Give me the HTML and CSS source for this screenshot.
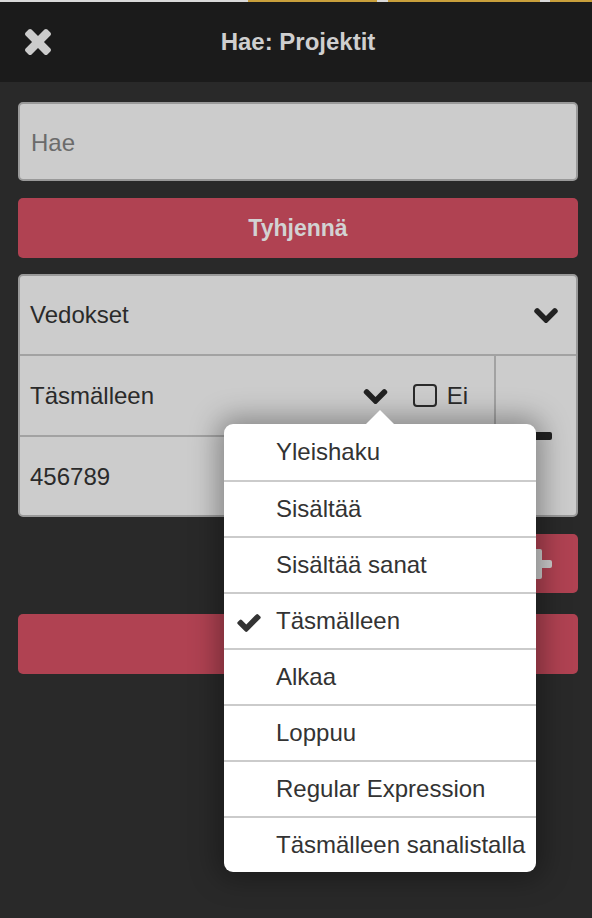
FILE: index.html
```html
<!DOCTYPE html>
<html lang="fi">
<head>
<meta charset="utf-8">
<title>Hae: Projektit</title>
<link rel="stylesheet" href="styles.css">
</head>
<body>
<div class="topstrip"></div>
<header class="bar">
  <div class="bar-left">
    <svg class="close-icon" viewBox="110 366 1188 1188" width="26" height="26" aria-hidden="true"><path d="M1298 1322q0 40-28 68l-136 136q-28 28-68 28t-68-28l-294-294-294 294q-28 28-68 28t-68-28l-136-136q-28-28-28-68t28-68l294-294-294-294q-28-28-28-68t28-68l136-136q28-28 68-28t68 28l294 294 294-294q28-28 68-28t68 28l136 136q28 28 28 68t-28 68l-294 294 294 294q28 28 28 68z"/></svg>
  </div>
  <h1 class="title">Hae: Projektit</h1>
  <div class="bar-right"></div>
</header>
<main class="content">
  <input class="search" type="text" placeholder="Hae">
  <button class="btn btn-wide">Tyhjennä</button>
  <div class="card">
    <div class="row row-field">
      <span class="row-label">Vedokset</span>
      <svg class="chevron" viewBox="53 362 1558 982" width="24" height="15" aria-hidden="true"><path d="M1611 565q0 53-37 90l-651 651q-38 38-91 38-54 0-90-38l-651-651q-38-36-38-90 0-53 38-91l74-75q39-37 91-37 53 0 90 37l486 486 486-486q37-37 90-37 52 0 91 37l75 75q37 39 37 91z"/></svg>
    </div>
    <div class="cond">
      <div class="cond-left">
        <div class="row row-op">
          <span class="row-label">Täsmälleen</span>
          <svg class="chevron chevron-op" viewBox="53 362 1558 982" width="25" height="15" aria-hidden="true"><path d="M1611 565q0 53-37 90l-651 651q-38 38-91 38-54 0-90-38l-651-651q-38-36-38-90 0-53 38-91l74-75q39-37 91-37 53 0 90 37l486 486 486-486q37-37 90-37 52 0 91 37l75 75q37 39 37 91z"/></svg>
          <span class="checkbox"></span>
          <span class="not-label">Ei</span>
        </div>
        <div class="row row-value">456789</div>
      </div>
      <div class="cond-remove"><span class="minus"></span></div>
    </div>
  </div>
  <div class="add-row">
    <button class="btn btn-add" aria-label="Lisää"><span class="plus"></span></button>
  </div>
  <button class="btn btn-wide btn-search" aria-label="Hae"></button>
</main>
<div class="popover">
  <ul class="menu">
    <li class="menu-item">Yleishaku</li>
    <li class="menu-item">Sisältää</li>
    <li class="menu-item">Sisältää sanat</li>
    <li class="menu-item selected"><svg class="check" viewBox="121 334 1550 1188" width="24" height="18" aria-hidden="true"><path d="M1671 566q0 40-28 68l-724 724-136 136q-28 28-68 28t-68-28l-136-136-362-362q-28-28-28-68t28-68l136-136q28-28 68-28t68 28l294 295 656-657q28-28 68-28t68 28l136 136q28 28 28 68z"/></svg>Täsmälleen</li>
    <li class="menu-item">Alkaa</li>
    <li class="menu-item">Loppuu</li>
    <li class="menu-item">Regular Expression</li>
    <li class="menu-item">Täsmälleen sanalistalla</li>
  </ul>
</div>
</body>
</html>
```

FILE: styles.css
```css
* { box-sizing: border-box; }

html, body {
  margin: 0;
  padding: 0;
  background: #292929;
  font-family: "Liberation Sans", Arial, sans-serif;
  width: 592px;
  height: 918px;
  overflow: hidden;
}

.topstrip {
  height: 2px;
  background: linear-gradient(to right,
    #d9d9d9 0 248px,
    #c9a03c 248px 377px,
    #d9d9d9 377px 388px,
    #c9a03c 388px 540px,
    #d9d9d9 540px 550px,
    #c9a03c 550px);
}

.bar {
  height: 80px;
  background: #1b1b1b;
  display: grid;
  grid-template-columns: 1fr auto 1fr;
  align-items: center;
}

.bar-left {
  padding-left: 25px;
  display: flex;
  align-items: center;
}

.close-icon { fill: #cccccc; display: block; }

.title {
  margin: 0;
  font-size: 24px;
  font-weight: bold;
  color: #cfcfcf;
  line-height: 28px;
  padding-left: 4px;
}

.content {
  padding: 20px 14px 0 18px;
  display: flex;
  flex-direction: column;
}

.search {
  height: 79px;
  width: 560px;
  border: 2px solid #999999;
  border-radius: 5px;
  background: #cccccc;
  font-family: "Liberation Sans", Arial, sans-serif;
  font-size: 24px;
  color: #333;
  padding: 2px 11px 0;
  margin: 0;
  outline: none;
}
.search::placeholder { color: #6b6b6b; opacity: 1; }

.btn {
  border: none;
  background: #b04252;
  border-radius: 5px;
  color: #d2d2d2;
  font-family: "Liberation Sans", Arial, sans-serif;
  font-weight: bold;
  font-size: 23px;
  padding: 0;
  margin: 0;
  display: flex;
  align-items: center;
  justify-content: center;
}

.btn-wide {
  width: 560px;
  height: 60px;
  margin-top: 17px;
}

.card {
  margin-top: 16px;
  width: 560px;
  border: 2px solid #999999;
  border-radius: 5px;
  background: #cccccc;
  color: #2a2a2a;
  font-size: 24px;
  overflow: hidden;
}

.row {
  display: flex;
  align-items: center;
  padding-left: 10px;
}

.row-field {
  height: 80px;
  border-bottom: 2px solid #a2a2a2;
  padding-right: 18px;
}

.row-label { flex: 1; }

.chevron { fill: #222; display: block; }

.cond {
  display: grid;
  grid-template-columns: 1fr 80px;
}

.cond-left {
  border-right: 2px solid #a2a2a2;
}

.row-op {
  height: 81px;
  border-bottom: 2px solid #a2a2a2;
  padding-right: 26px;
}

.chevron-op { margin-right: 25px; margin-top: 2px; }

.checkbox {
  width: 24px;
  height: 23px;
  border: 2px solid #2a2a2a;
  border-radius: 4px;
  margin-right: 10px;
}

.not-label { line-height: 24px; }

.row-value {
  height: 78px;
  padding-top: 2px;
}

.cond-remove {
  display: flex;
  align-items: center;
  justify-content: center;
}

.minus {
  width: 30px;
  height: 8px;
  border-radius: 2px;
  background: #222;
  margin-left: 1px;
}

.add-row {
  display: flex;
  justify-content: flex-end;
  width: 560px;
  margin-top: 17px;
}

.btn-add {
  width: 82px;
  height: 59px;
  position: relative;
}

.plus {
  position: relative;
  width: 28px;
  height: 30px;
  margin-left: 2px;
}
.plus::before, .plus::after {
  content: "";
  position: absolute;
  background: #cccccc;
  border-radius: 2px;
}
.plus::before { left: 10px; top: 0; width: 8px; height: 30px; }
.plus::after { left: 0; top: 11px; width: 28px; height: 8px; }

.btn-search {
  margin-top: 21px;
}

.popover {
  position: absolute;
  left: 224px;
  top: 424px;
  width: 312px;
  height: 448px;
  background: #ffffff;
  border-radius: 9px;
  box-shadow: 0 0 28px 6px rgba(0, 0, 0, 0.35);
}
.popover::before {
  content: "";
  position: absolute;
  top: -14px;
  left: 142px;
  border-left: 14px solid transparent;
  border-right: 14px solid transparent;
  border-bottom: 14px solid #ffffff;
}

.menu {
  list-style: none;
  margin: 0;
  padding: 0;
}

.menu-item {
  position: relative;
  height: 56px;
  display: flex;
  align-items: center;
  padding-left: 52px;
  font-size: 24px;
  color: #333333;
}
.menu-item + .menu-item {
  border-top: 2px solid #cbcbcb;
}

.check {
  position: absolute;
  left: 13px;
  top: 20px;
  fill: #333333;
}
```
